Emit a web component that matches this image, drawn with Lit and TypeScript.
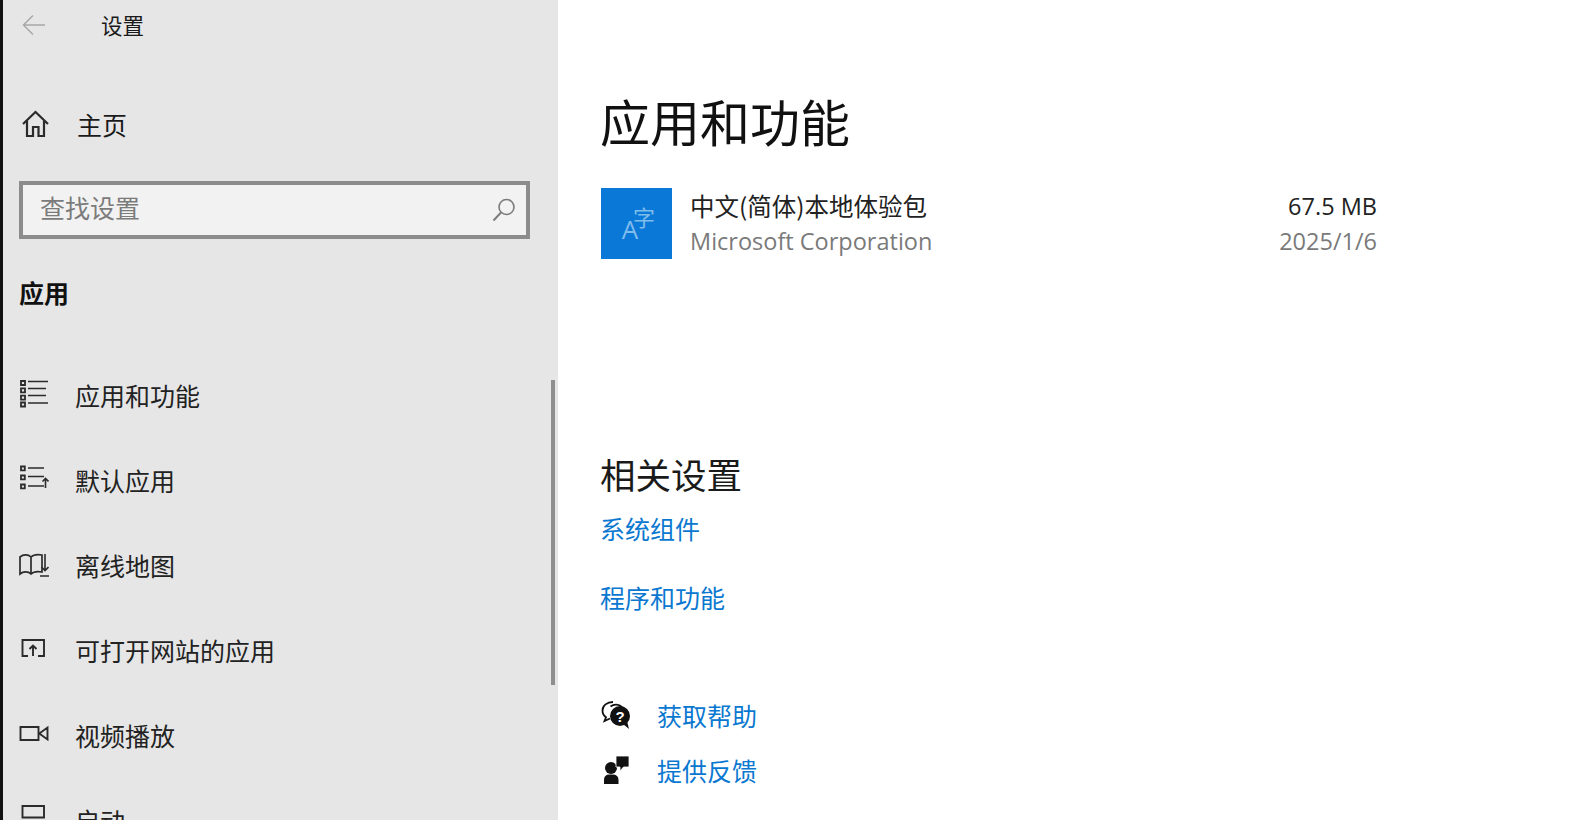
import { LitElement, html, css, svg } from "lit";
import { customElement } from "lit/decorators.js";

const ic = (w: number, h: number, body: unknown) =>
  html`<svg class="ic" width=${w} height=${h} viewBox="0 0 ${w} ${h}" fill="none" stroke="#2b2b2b" stroke-width="1.7">${body}</svg>`;

const nav = [
  {
    t: "应用和功能",
    i: ic(30, 30, svg`<path d="M2 1h4v4H2zM2 8.300h4v4H2zM2 15.600h4v4H2zM2 22.500h4v4H2z" stroke-width="1.800"/><path d="M9 1.500h20M9 8.500h18M9 15.500h18M9 23h20" stroke-width="1.600"/>`),
  },
  {
    t: "默认应用",
    i: ic(30, 30, svg`<path d="M2 1.500h3.800v3.800H2zM2 10.500h3.800v3.800H2zM2 19.500h3.800v3.800H2z" stroke-width="1.800"/><path d="M9 3h16M9 11.500h16M9 21h16" stroke-width="1.600"/><path d="M26.500 23V13.500M23.500 16.500l3-3 3 3" stroke-width="1.600"/>`),
  },
  {
    t: "离线地图",
    i: ic(30, 30, svg`<path d="M1 7c3-2.500 8-3 11 0 3-3 8-2.500 11-2v17c-3-.5-8-1-11 2-3-3-8-2.500-11 0zM12 7v17M23 5v17"/><path d="M26 4v16M22.500 17l3.500 3.500 3.500-3.500M21 26h9" stroke-width="1.600"/>`),
  },
  {
    t: "可打开网站的应用",
    i: ic(30, 30, svg`<path d="M9 21H3.500V5h21.500v16h-6" stroke-width="1.900"/><path d="M14 21V10.500M10.500 14l3.500-3.500 3.500 3.500" stroke-width="1.900"/>`),
  },
  {
    t: "视频播放",
    i: ic(30, 30, svg`<path d="M1.500 7h18v13h-18zM21 13l7.500-5.500v12L21 14z" stroke-width="1.900"/>`),
  },
  {
    t: "启动",
    i: ic(30, 30, svg`<path d="M3.500 1h21.500v11.500H3.500z" stroke-width="1.900"/>`),
  },
];

@customElement("app-root")
export class AppRoot extends LitElement {
  static styles = css`
    :host {
      display: flex;
      width: 1575px;
      height: 820px;
      overflow: hidden;
      background: #fff;
      color: #1a1a1a;
      font-family: "Noto Sans CJK SC", "Noto Sans", sans-serif;
    }
    .strip { width: 3px; background: #111; flex: none; }
    .side {
      position: relative;
      width: 555px;
      height: 820px;
      flex: none;
      background: #e6e6e6;
      overflow: hidden;
      box-sizing: border-box;
    }
    .top {
      height: 49px;
      display: flex;
      align-items: center;
      padding-left: 19px;
      gap: 55px;
      font-size: 21.500px;
    }
    .home {
      margin-top: 49px;
      height: 52px;
      display: flex;
      align-items: center;
      padding-left: 18px;
      gap: 27px;
      font-size: 25px;
      font-weight: 400;
    }
    .search {
      box-sizing: border-box;
      margin: 31px 0 0 16px;
      width: 511px;
      height: 58px;
      border: 4px solid #8c8c8c;
      background: #f2f2f2;
      display: flex;
      align-items: center;
      justify-content: space-between;
      padding: 0 9px 0 17px;
      font-size: 25px;
      color: #7b7b7b;
    }
    .search span { margin-top: -6px; }
    .group {
      margin: 38px 0 0 16px;
      height: 30px;
      line-height: 30px;
      font-size: 25px;
      font-weight: 700;
      color: #111;
    }
    .nav { margin-top: 45.500px; }
    .row {
      height: 85px;
      display: flex;
      align-items: center;
      gap: 26px;
      padding-left: 16px;
      font-size: 25px;
      color: #222;
    }
    .ic { flex: none; display: block; }
    .bar {
      position: absolute;
      left: 548px;
      top: 380px;
      width: 4px;
      height: 305px;
      background: #8f8f8f;
    }
    .main {
      flex: 1;
      padding: 81px 0 0 43px;
      box-sizing: border-box;
    }
    h1 {
      margin: 0 0 0 -1px;
      height: 78px;
      line-height: 78px;
      font-size: 50px;
      font-weight: 400;
      color: #111;
    }
    .app {
      margin-top: 29px;
      display: flex;
      width: 776px;
      height: 71px;
    }
    .tile {
      width: 71px;
      height: 71px;
      background: #0a78d7;
      flex: none;
    }
    .info { margin-left: 18px; flex: 1; }
    .l1, .l2 { height: 35px; line-height: 35px; font-size: 24.500px; }
    .l1 { color: #222; }
    .l2 {
      color: #7a7a7a;
      font-family: "Open Sans", "Noto Sans CJK SC", sans-serif;
      font-size: 23.500px;
      position: relative;
      top: 1px;
    }
    .r { text-align: right; }
    .meta { font-family: "Open Sans", "Noto Sans CJK SC", sans-serif; font-size: 23.500px; }
    .r .l1 { padding-top: 1px; box-sizing: border-box; }
    h2 {
      margin: 191px 0 0 -1px;
      height: 48px;
      line-height: 48px;
      font-size: 35.500px;
      font-weight: 400;
      color: #1a1a1a;
    }
    a {
      display: block;
      color: #0a78d0;
      font-size: 25px;
      height: 36px;
      line-height: 36px;
    }
    .links a + a { margin-top: 33px; }
    .links { margin: 12px 0 0 -1px; }
    .help { margin-top: 82px; display: flex; flex-direction: column; gap: 19px; }
    .hrow { display: flex; align-items: center; gap: 26px; height: 36px; }
    .tile text { fill: #7fbcec; }
    .ta { font-family: "Open Sans", sans-serif; font-size: 26px; }
    .tz { font-family: "Noto Sans CJK SC", sans-serif; font-size: 22px; }
  `;

  render() {
    return html`
      <div class="strip"></div>
      <aside class="side">
        <div class="top">
          <svg width="24" height="24" viewBox="0 0 24 24" fill="none" stroke="#a8a8a8" stroke-width="1.500"><path d="M23 12H2M11 2.500 1.500 12l9.500 9.500"/></svg>
          <span>设置</span>
        </div>
        <div class="home">
          <svg class="ic" width="29" height="30" viewBox="0 0 29 30" fill="none" stroke="#2b2b2b" stroke-width="2.200"><path d="M2 15 14.500 3 27 15M6 12v15h6V18h5.500v9H23V12"/></svg>
          <span>主页</span>
        </div>
        <div class="search">
          <span>查找设置</span>
          <svg width="26" height="26" viewBox="0 0 26 26" fill="none" stroke="#7b7b7b" stroke-width="1.600"><circle cx="15.500" cy="10" r="7.500"/><path d="M10 15.500 2.500 23.500" stroke-width="2"/></svg>
        </div>
        <div class="group">应用</div>
        <div class="nav">
          ${nav.map((n) => html`<div class="row">${n.i}<span>${n.t}</span></div>`)}
        </div>
        <div class="bar"></div>
      </aside>
      <main class="main">
        <h1>应用和功能</h1>
        <div class="app">
          <div class="tile">
            <svg width="71" height="71" viewBox="0 0 71 71">
              <text class="ta" x="29" y="51" text-anchor="middle">A</text>
              <text class="tz" x="43" y="38" text-anchor="middle">字</text>
            </svg>
          </div>
          <div class="info">
            <div class="l1">中文(简体)本地体验包</div>
            <div class="l2">Microsoft Corporation</div>
          </div>
          <div class="r meta">
            <div class="l1 meta">67.5 MB</div>
            <div class="l2">2025/1/6</div>
          </div>
        </div>
        <h2>相关设置</h2>
        <div class="links">
          <a>系统组件</a>
          <a>程序和功能</a>
        </div>
        <div class="help">
          <div class="hrow">
            <svg width="30" height="30" viewBox="0 0 30 30" class="ic"><path d="M12 2C6 2 1.500 5.500 1.500 10.500c0 3 1.500 5.300 3.500 6.800L3.500 21l5.500-2.500" fill="none" stroke="#111" stroke-width="1.800"/><path d="M9.500 6.500A9 9 0 0 1 21 7" fill="none" stroke="#111" stroke-width="1.800"/><circle cx="19" cy="16" r="10" fill="#111"/><path d="m22 24 6 5-2-8z" fill="#111"/><text x="19" y="22" text-anchor="middle" font-size="15" font-weight="700" fill="#fff" font-family="Liberation Sans">?</text></svg>
            <a>获取帮助</a>
          </div>
          <div class="hrow">
            <svg width="30" height="30" viewBox="0 0 30 30" class="ic"><circle cx="10" cy="13" r="6" fill="#111"/><path d="M3 29v-4q0-5.500 5.500-5.500h3q6 0 6 5.500v4z" fill="#111"/><path d="M15 1h13v11h-5.500l-3.500 4v-4h-4z" fill="#111" stroke="#fff" stroke-width="0.800"/></svg>
            <a>提供反馈</a>
          </div>
        </div>
      </main>
    `;
  }
}
